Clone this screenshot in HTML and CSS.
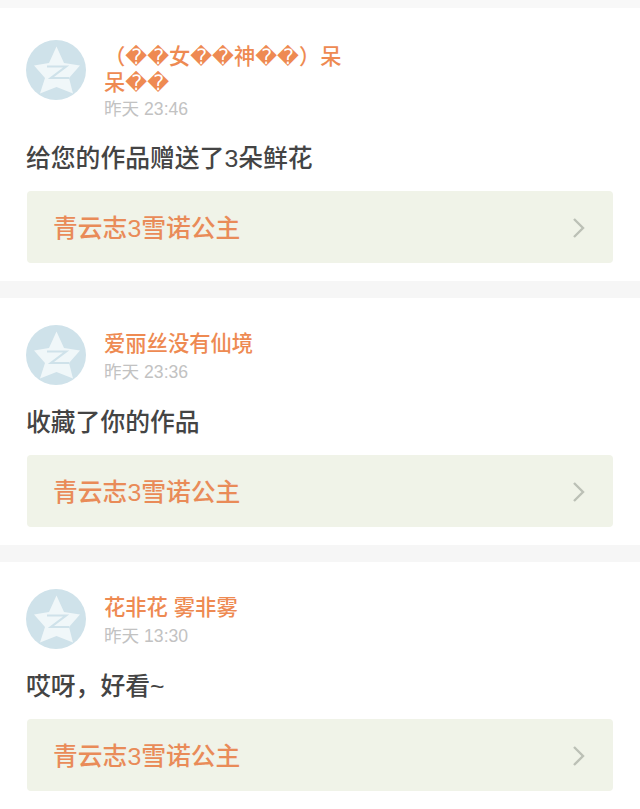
FILE: index.html
```html
<!DOCTYPE html>
<html lang="zh-CN">
<head>
    <meta charset="UTF-8">
    <meta name="viewport" content="width=device-width, initial-scale=1.0">
    <title>消息</title>
    <link rel="stylesheet" href="styles.css">
</head>
<body>
    <svg class="icon-defs" width="0" height="0">
        <symbol id="avatar" viewBox="0 0 60 60">
            <circle cx="30" cy="30" r="30" fill="#cfe2ea"/>
            <path d="M30.5 6.5 L38 23 L54 25.5 L43 38 L47 53.5 L30.5 47 L14 53.5 L19 38 L8 25.5 L23 23 Z" fill="#f0f7f9"/>
            <path d="M21 26.5 H40 L25 38 H43" fill="none" stroke="#cfe2ea" stroke-width="2.2"/>
        </symbol>
        <symbol id="chevron" viewBox="0 0 14 22">
            <path d="M2 2 L11 11 L2 20" fill="none" stroke="#bcc0b6" stroke-width="2.4"/>
        </symbol>
    </svg>

    <div class="top-bar"></div>

    <div class="message first">
        <div class="user-row">
            <svg class="avatar"><use href="#avatar"/></svg>
            <div class="user-info">
                <div class="user-name">（��女��神��）呆呆��</div>
                <div class="time">昨天 23:46</div>
            </div>
        </div>
        <p class="message-text">给您的作品赠送了3朵鲜花</p>
        <a class="work-link" href="#">
            <span>青云志3雪诺公主</span>
            <svg class="chevron"><use href="#chevron"/></svg>
        </a>
    </div>

    <div class="message">
        <div class="user-row">
            <svg class="avatar"><use href="#avatar"/></svg>
            <div class="user-info">
                <div class="user-name">爱丽丝没有仙境</div>
                <div class="time">昨天 23:36</div>
            </div>
        </div>
        <p class="message-text">收藏了你的作品</p>
        <a class="work-link" href="#">
            <span>青云志3雪诺公主</span>
            <svg class="chevron"><use href="#chevron"/></svg>
        </a>
    </div>

    <div class="message">
        <div class="user-row">
            <svg class="avatar"><use href="#avatar"/></svg>
            <div class="user-info">
                <div class="user-name">花非花 雾非雾</div>
                <div class="time">昨天 13:30</div>
            </div>
        </div>
        <p class="message-text">哎呀，好看~</p>
        <a class="work-link" href="#">
            <span>青云志3雪诺公主</span>
            <svg class="chevron"><use href="#chevron"/></svg>
        </a>
    </div>
</body>
</html>
```

FILE: styles.css
```css
html {
    height: 100%;
    overflow: hidden;
}

body {
    font-family: "Liberation Sans", "Noto Sans CJK SC", "DejaVu Sans", sans-serif;
    margin: 0;
    padding: 0;
    background-color: #f6f6f6;
    color: #333;
    display: flex;
    flex-direction: column;
    gap: 17px;
}

.icon-defs {
    position: absolute;
}

.top-bar {
    height: 8px;
    margin-bottom: -17px;
    background-color: #f8f8f8;
    box-shadow: 0 1px 2px rgba(0, 0, 0, 0.1);
}

.message {
    background-color: #fff;
    padding: 27px 26px 18px 26px;
}

.message.first {
    padding-top: 32px;
}

.user-row {
    display: flex;
    gap: 18px;
}

.avatar {
    width: 60px;
    height: 60px;
    flex-shrink: 0;
}

.user-info {
    width: 240px;
    padding-top: 6px;
}

.first .user-info {
    padding-top: 4px;
}

.user-name {
    font-size: 21.3px;
    font-weight: 500;
    line-height: 26px;
    color: #ee8a52;
}

.time {
    font-size: 17.6px;
    line-height: 26px;
    margin-top: 2px;
    color: #c2c2c2;
}

.first .time {
    margin-top: 0;
}

.message-text {
    font-size: 24.8px;
    font-weight: 500;
    line-height: 32px;
    margin: 22px 0 16px 0;
    color: #444;
}

.first .message-text {
    margin-top: 21px;
}

.work-link {
    display: flex;
    justify-content: space-between;
    align-items: center;
    height: 72px;
    margin: 0 1px;
    padding: 0 27px 0 26px;
    background-color: #f0f3e8;
    border-radius: 4px;
    font-size: 24.8px;
    font-weight: 500;
    color: #e98b58;
    text-decoration: none;
}

.work-link span {
    margin-bottom: 2px;
}

.chevron {
    width: 14px;
    height: 22px;
    margin-top: 2px;
}
```
